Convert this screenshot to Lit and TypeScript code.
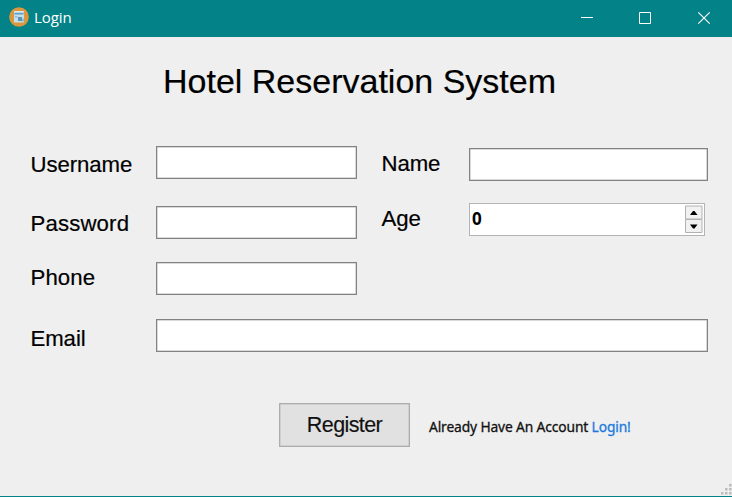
import { LitElement, html, css, svg } from "lit";
import { customElement } from "lit/decorators.js";

@customElement("title-bar")
class TitleBar extends LitElement {
  static styles = css`
    :host { display: flex; height: 37px; background: #038387; color: #fff; }
    .logo { width: 20px; height: 20px; margin: 7px 0 0 9px; flex: none; }
    .name { flex: 1; margin-left: 5px; font: 15px/35px "Open Sans", "Noto Sans", sans-serif; letter-spacing: -0.100px; }
    .controls { width: 174px; height: 37px; flex: none; }
  `;
  render() {
    return html`
      <svg class="logo" viewBox="0 0 20 20">
        <circle cx="10" cy="10" r="9.8" fill="#dc963b" />
        <path d="M5 5l.7-1h8.800l.5 1v10.500H5z" fill="#c3dfeb" />
        <path d="M5.500 5.500h9v2h-9z" fill="#5f9fc6" />
        <path d="M5 4h9.500v1.500H5z" fill="#dceaf0" />
        <path d="M6 9h2.500v1.500H6zM12.500 11.500h2.500v3h-2.500z" fill="#8fbdd6" />
        <path d="M9 10h4v4H9z" fill="#5b93b6" />
      </svg>
      <span class="name">Login</span>
      <svg class="controls" viewBox="558 0 174 37" fill="none" stroke="#fff">
        <path d="M581 17.500h12" />
        <path d="M639.500 12.500h11v11h-11z" />
        <path d="M698.300 12.300l11.400 11.400M709.700 12.300l-11.400 11.400" stroke-width="1.150" />
      </svg>
    `;
  }
}

@customElement("form-field")
class FormField extends LitElement {
  static properties = { label: {}, kind: {} };
  declare label: string;
  declare kind: string;
  static styles = css`
    :host { display: flex; height: 33px; }
    .label {
      flex: none; width: var(--label-width, 126px); height: 33px; box-sizing: border-box;
      font: 22.2px/33px "Liberation Sans", Arial, sans-serif; color: #000;
      margin-top: var(--drop, 0px); padding-left: 0.500px; letter-spacing: var(--track, -0.080px);
      white-space: nowrap; -webkit-text-stroke: 0.200px #000;
    }
    .box { flex: 1; box-sizing: border-box; height: 33px; background: #fff; border: 1px solid #828282; box-shadow: inset 0 0 0 0.500px #b5b5b5; }
    .spin { display: flex; border-color: #b4b4b8; box-shadow: none; margin-right: 3px; }
    .value { flex: 1; padding-left: 2px; font: bold 17px/29px "Open Sans", "Noto Sans", sans-serif; color: #000; }
    .buttons { width: 20px; height: 31px; flex: none; }
  `;
  render() {
    return html`
      <span class="label">${this.label}</span>
      ${this.kind === "number"
        ? html`<div class="box spin">
            <span class="value">0</span>
            <svg class="buttons" viewBox="0 0 20 31">
              <path d="M1.500 2h16.500v13H1.500zM1.500 15.500h16.500v13H1.500z" fill="#f1f1f1" stroke="#b2b2b2" />
              <path d="M6 11h7.500L10.500 7H9zM6 20.500h7.500l-3 4H9z" fill="#000" />
            </svg>
          </div>`
        : html`<div class="box"></div>`}
    `;
  }
}

@customElement("app-root")
class AppRoot extends LitElement {
  static styles = css`
    :host {
      display: flex; flex-direction: column; width: 732px; height: 497px;
      box-sizing: border-box; overflow: hidden; background: #efefef; border-bottom: 1px solid #038387;
    }
    .heading {
      margin: 24px 0 2px 163px; height: 40px; color: #000; white-space: nowrap;
      font: 34px/40px "Liberation Sans", Arial, sans-serif;
      -webkit-text-stroke: 0.200px #000;
    }
    .columns { display: flex; padding: 43px 24px 0 30px; }
    .left { width: 327px; flex: none; }
    .right { flex: 1; margin-left: 24px; --label-width: 88px; }
    .username { --drop: 2px; }
    .password { --drop: 1px; --track: 0.150px; margin-top: 27px; }
    .phone { --drop: -1px; --track: 0.100px; margin-top: 23px; }
    .name { --drop: -1px; margin-top: 2px; }
    .age { --drop: -1px; margin-top: 22px; }
    .email { --drop: 3px; margin: 24px 24px 0 30px; }
    .actions { display: flex; margin: 51px 0 0 279px; height: 44px; }
    .register {
      box-sizing: border-box; width: 131px; height: 44px; padding: 0; border: 1px solid #adadad;
      box-shadow: inset 0 0 0 0.500px #bdbdbd; background: #e1e1e1; color: #111; text-align: center;
      font: 21.500px/41px "Liberation Sans", Arial, sans-serif; letter-spacing: -0.600px;
      -webkit-text-stroke: 0.150px #111;
    }
    .hint {
      margin-left: 19px; font: 13.800px/48px "Noto Sans", "Open Sans", sans-serif; color: #111;
      white-space: nowrap; -webkit-text-stroke: 0.300px currentColor; letter-spacing: -0.130px;
    }
    .link { color: #1a7bdc; }
    .grip { width: 12px; height: 12px; margin: auto 0 0 auto; display: block; }
  `;
  render() {
    const dots = [[8, 0], [4, 4], [8, 4], [0, 8], [4, 8], [8, 8]];
    return html`
      <title-bar></title-bar>
      <div class="heading">Hotel Reservation System</div>
      <div class="columns">
        <div class="left">
          <form-field class="username" label="Username"></form-field>
          <form-field class="password" label="Password"></form-field>
          <form-field class="phone" label="Phone"></form-field>
        </div>
        <div class="right">
          <form-field class="name" label="Name"></form-field>
          <form-field class="age" label="Age" kind="number"></form-field>
        </div>
      </div>
      <form-field class="email" label="Email"></form-field>
      <div class="actions">
        <button class="register">Register</button>
        <span class="hint">Already Have An Account <span class="link">Login!</span></span>
      </div>
      <svg class="grip" viewBox="0 0 12 12">
        ${dots.map(([x, y]) => svg`<rect x=${x + 1} y=${y} width="2.5" height="2.5" fill="#bcbcbc" />`)}
      </svg>
    `;
  }
}
